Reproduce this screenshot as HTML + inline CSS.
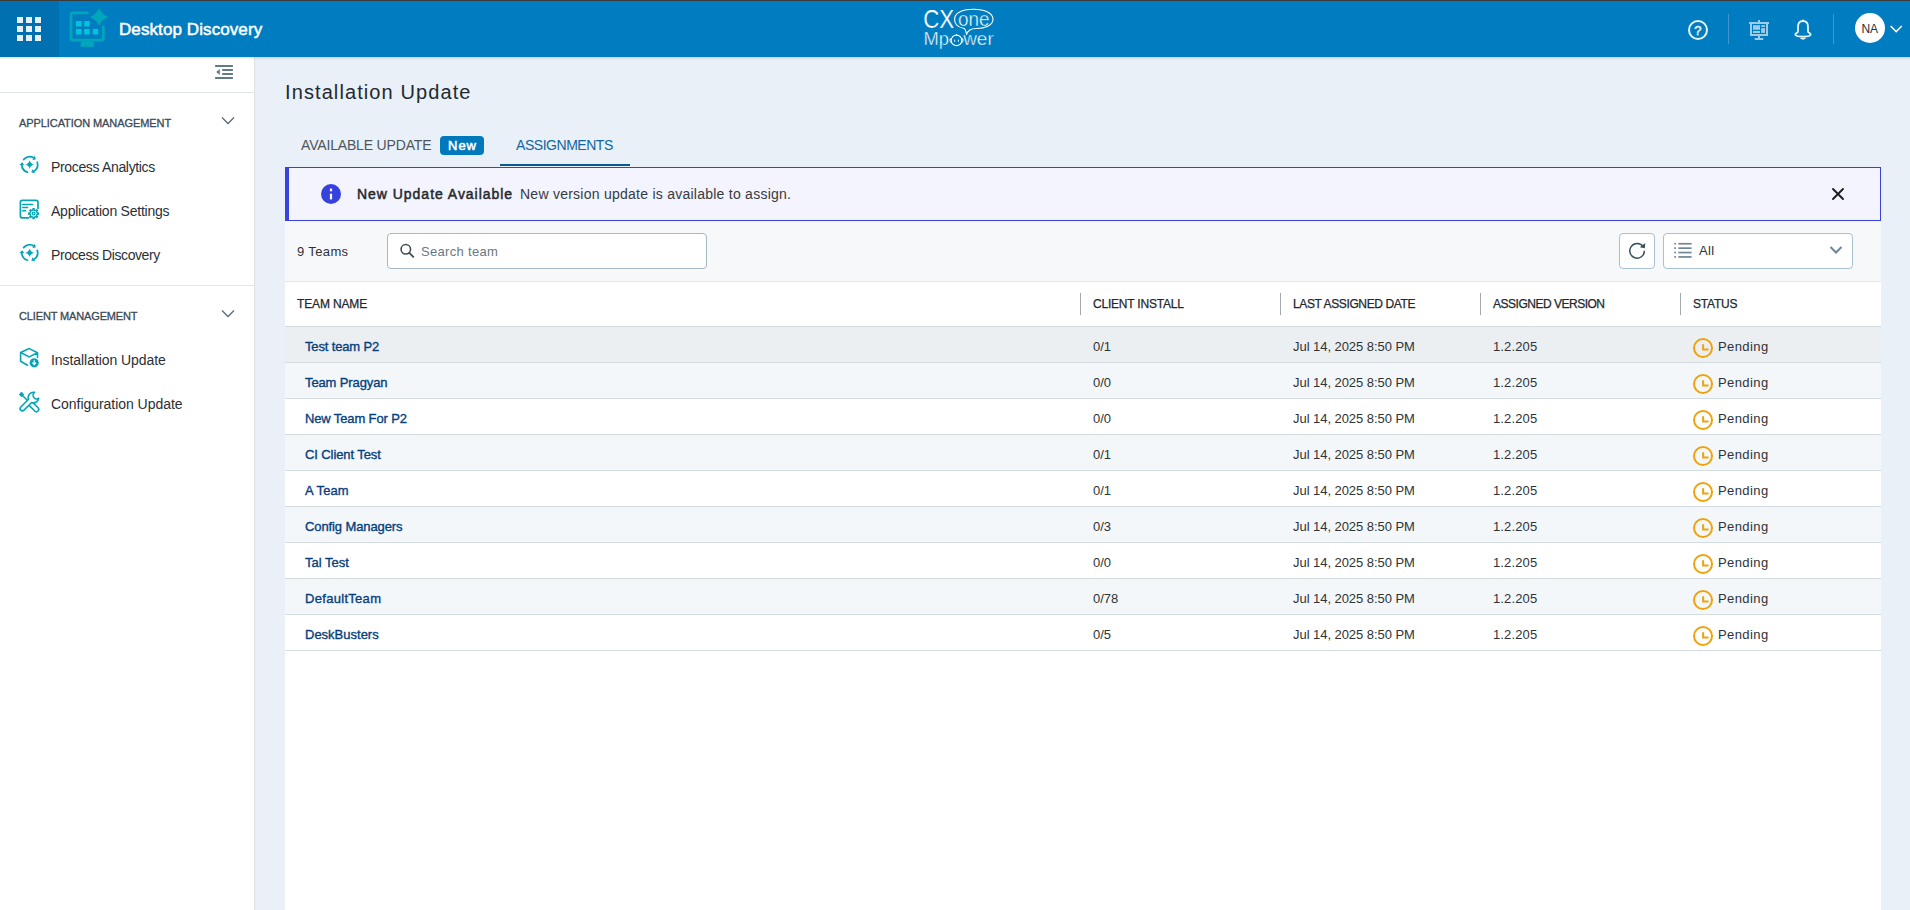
<!DOCTYPE html>
<html><head><meta charset="utf-8">
<style>
*{box-sizing:border-box;margin:0;padding:0}
html,body{width:1910px;height:910px;overflow:hidden;background:#e9f0f7;font-family:"Liberation Sans",sans-serif;color:#2a2f33}
.abs{position:absolute}
.t{position:absolute;white-space:nowrap;line-height:1}
#topline{left:0;top:0;width:1910px;height:1px;background:#3a3a3a}
#hdr{left:0;top:1px;width:1910px;height:56px;background:#007cc1}
#hdrdark{left:0;top:1px;width:59px;height:56px;background:#0070b0}
#hdrshadow{left:0;top:57px;width:1910px;height:3px;background:linear-gradient(rgba(0,0,0,0.13),rgba(0,0,0,0.04) 60%,rgba(0,0,0,0))}
.gsq{position:absolute;width:6px;height:6px;background:#e9f1f8}
#side{left:0;top:57px;width:254px;height:853px;background:#fff}
#sideb{left:254px;top:57px;width:1px;height:853px;background:#dfe2e5}
.sh{font-size:11px;color:#3b4955;-webkit-text-stroke:0.3px #3b4955}
.si{left:51px;font-size:14px;color:#2b3036}
.hl{position:absolute;left:0;width:254px;height:1px;background:#e3e6e8}
.tab{font-size:14px}
#banner{left:285px;top:167px;width:1596px;height:54px;background:#f3f4fe;border:1px solid #3843dd;border-left:4px solid #3843dd}
#tool{left:285px;top:221px;width:1596px;height:61px;background:#f7f8fa;border-bottom:1px solid #e3e7ea}
#table{left:285px;top:282px;width:1596px;height:628px;background:#fff}
.th{top:298px;font-size:12px;color:#22282d;-webkit-text-stroke:0.25px #22282d}
.csep{position:absolute;top:293px;width:1px;height:22px;background:#a6a9ac}
.row{position:absolute;left:285px;width:1596px;height:36px;border-bottom:1px solid #d5dce1}
.row span{position:absolute;top:13px;font-size:13px;line-height:1;white-space:nowrap;color:#2e3338}
.row .tn{left:20px;color:#073f7c;-webkit-text-stroke:0.35px #073f7c}
.row .ci{left:808px;letter-spacing:-0.05px}
.row .dt{left:1008px;letter-spacing:-0.05px}
.row .vr{left:1208px;letter-spacing:0.13px}
.row .st{left:1433px;letter-spacing:0.4px}
.clock{position:absolute;left:1407px;top:10px}

</style></head><body>
<div id="topline" class="abs"></div>
<div id="hdr" class="abs"></div>
<div id="hdrdark" class="abs"></div>

<div class="abs" style="left:17px;top:17px;width:24px;height:24px">
 <div class="gsq" style="left:0;top:0"></div><div class="gsq" style="left:9px;top:0"></div><div class="gsq" style="left:18px;top:0"></div>
 <div class="gsq" style="left:0;top:9px"></div><div class="gsq" style="left:9px;top:9px"></div><div class="gsq" style="left:18px;top:9px"></div>
 <div class="gsq" style="left:0;top:18px"></div><div class="gsq" style="left:9px;top:18px"></div><div class="gsq" style="left:18px;top:18px"></div>
</div>

<svg class="abs" style="left:66px;top:6px" width="46" height="44" viewBox="66 6 46 44">
 <path d="M87.5 12.8 H73.3 Q71 12.8 71 15.1 V37.9 Q71 40.2 73.3 40.2 H101 Q103.3 40.2 103.3 37.9 V27" fill="none" stroke="#00a6b9" stroke-width="2.8" stroke-linecap="round"/>
 <path d="M80.6 46.4 L94 46.4 L92.8 41.2 L81.6 41.2 Z" fill="#00a6b9" stroke="#00a6b9" stroke-width="0.6" stroke-linejoin="round"/>
 <rect x="76" y="21" width="5.5" height="5.5" fill="#00c3dc"/>
 <rect x="84.2" y="21" width="5.5" height="5.5" fill="#00c3dc"/>
 <rect x="76" y="29" width="5.5" height="5.5" fill="#00c3dc"/>
 <rect x="84.2" y="29" width="5.5" height="5.5" fill="#00c3dc"/>
 <rect x="92.7" y="29" width="5.5" height="5.5" fill="#00c3dc"/>
 <path d="M99.1 7.9 Q101.7 14.3 108.2 16.9 Q101.7 19.5 99.1 26 Q96.5 19.5 90 16.9 Q96.5 14.3 99.1 7.9 Z" fill="#00a6b9"/>
</svg>
<div class="t" style="left:119px;top:21px;font-size:17px;color:#fff;-webkit-text-stroke:0.5px #fff;letter-spacing:0.09px">Desktop Discovery</div>

<svg class="abs" style="left:918px;top:4px" width="80" height="48" viewBox="918 4 80 48">
 <g font-family="Liberation Sans" fill="#fff" stroke="#007cc1" paint-order="normal">
  <text x="923.2" y="27.8" font-size="25" stroke-width="0.2" textLength="31" lengthAdjust="spacingAndGlyphs">CX</text>
  <text x="958" y="25.9" font-size="20.5" stroke-width="0.45" textLength="31.5" lengthAdjust="spacingAndGlyphs">one</text>
  <text x="923.4" y="45.3" font-size="18.5" stroke-width="0.4" textLength="25.5" lengthAdjust="spacingAndGlyphs">Mp</text>
  <text x="963.2" y="45.3" font-size="18.5" stroke-width="0.4" textLength="30.5" lengthAdjust="spacingAndGlyphs">wer</text>
 </g>
 <path d="M963.5 28.2 C957 27.5 954.2 23 954.6 18.5 C955.3 12.3 963.5 9.3 973.5 9.3 C985 9.3 993 13 993 19.3 C993 25 986 28.5 976 28.5 C970.5 28.5 967.8 30.5 966.5 34.5 C966 31 965.5 28.5 963.5 28.2 Z" fill="none" stroke="#fff" stroke-width="1.1" stroke-linejoin="round"/>
 <circle cx="956.5" cy="40.4" r="5.3" fill="none" stroke="#fff" stroke-width="1.2"/>
 <path d="M950.6 38.3 Q949 40.4 950.6 42.5 M962.4 38.3 Q964 40.4 962.4 42.5" fill="none" stroke="#fff" stroke-width="1.1"/>
 <rect x="954.3" y="39.5" width="0.9" height="2.4" rx="0.4" fill="#fff"/>
 <rect x="957.9" y="39.5" width="0.9" height="2.4" rx="0.4" fill="#fff"/>
 <path d="M955.3 35.6 L956.5 34.3 L957.7 35.6" fill="none" stroke="#fff" stroke-width="0.8"/>
</svg>

<svg class="abs" style="left:1680px;top:10px" width="230" height="40" viewBox="1680 10 230 40">
 <circle cx="1698" cy="30" r="9" fill="none" stroke="#e9f3fa" stroke-width="2"/>
 <text x="1694.3" y="35" font-family="Liberation Sans" font-size="13" fill="#e9f3fa" stroke="#e9f3fa" stroke-width="0.5">?</text>
 <rect x="1728" y="14" width="1" height="30" fill="#3f97d0"/>
 <g fill="#9ccbe8">
  <rect x="1749" y="22" width="20" height="2"/>
  <rect x="1758" y="20" width="2" height="2"/>
  <rect x="1750" y="24" width="2" height="12"/>
  <rect x="1766" y="24" width="2" height="12"/>
  <rect x="1750" y="34" width="18" height="2"/>
  <rect x="1753" y="25.2" width="7" height="4.6"/>
  <rect x="1753" y="31" width="7" height="2"/>
  <rect x="1761.2" y="25.2" width="3.8" height="1.8"/>
  <rect x="1761.2" y="28.1" width="3.8" height="4.8"/>
  <rect x="1758" y="36" width="2" height="2.2"/>
  <rect x="1754.7" y="38" width="8.5" height="2"/>
 </g>
 <path d="M1803 21 C1799.5 21 1798 23.5 1798 27 L1798 31.5 C1798 32.8 1795.3 33.2 1795.3 34.5 C1795.3 36 1799 36.6 1803 36.6 C1807 36.6 1810.7 36 1810.7 34.5 C1810.7 33.2 1808 32.8 1808 31.5 L1808 27 C1808 23.5 1806.5 21 1803 21 Z" fill="none" stroke="#e8f2f9" stroke-width="1.8" stroke-linejoin="round"/>
 <path d="M1800.5 38.2 Q1803 40.4 1805.5 38.2 Z" fill="#e8f2f9" stroke="#e8f2f9" stroke-width="1"/>
 <circle cx="1803" cy="20.6" r="1.1" fill="#e8f2f9"/>
 <rect x="1833" y="14" width="1" height="30" fill="#3f97d0"/>
 <circle cx="1870" cy="28" r="15" fill="#fff"/>
 <text x="1869.8" y="32.5" font-family="Liberation Sans" font-size="12" fill="#2b2f33" text-anchor="middle">NA</text>
 <path d="M1890.6 26 L1896.2 31.6 L1901.8 26" fill="none" stroke="#fff" stroke-width="1.5"/>
</svg>

<div id="side" class="abs"></div>
<div id="sideb" class="abs"></div>
<div id="hdrshadow" class="abs"></div>
<svg class="abs" style="left:212px;top:62px" width="24" height="20" viewBox="212 62 24 20">
 <path d="M215.1 66 H232.9 M222.2 70 H232.9 M222.2 74 H232.9 M215.1 78 H232.9" stroke="#637a88" stroke-width="1.9"/>
 <path d="M219.8 68.9 L216.2 71.9 L219.8 74.9 Z" fill="#637a88"/>
</svg>
<div class="hl" style="top:92px"></div>
<div class="t sh" style="left:19px;top:118px;letter-spacing:-0.08px">APPLICATION MANAGEMENT</div>
<svg class="abs" style="left:220px;top:114px" width="16" height="14"><path d="M2 3.5 L8 9.5 L14 3.5" fill="none" stroke="#5c6a74" stroke-width="1.3"/></svg>
<div class="t si" style="top:160px;letter-spacing:-0.34px">Process Analytics</div>
<div class="t si" style="top:204px;letter-spacing:-0.23px">Application Settings</div>
<div class="t si" style="top:248px;letter-spacing:-0.42px">Process Discovery</div>
<div class="hl" style="top:285px"></div>
<div class="t sh" style="left:19px;top:311px;letter-spacing:-0.14px">CLIENT MANAGEMENT</div>
<svg class="abs" style="left:220px;top:307px" width="16" height="14"><path d="M2 3.5 L8 9.5 L14 3.5" fill="none" stroke="#5c6a74" stroke-width="1.3"/></svg>
<div class="t si" style="top:353px;letter-spacing:-0.06px">Installation Update</div>
<div class="t si" style="top:397px;letter-spacing:-0.04px">Configuration Update</div>

<!-- main -->
<div class="t" style="left:285px;top:82px;font-size:20px;color:#23292e;letter-spacing:1.1px">Installation Update</div>
<div class="t tab" style="left:301px;top:138px;color:#4d565d;letter-spacing:-0.17px">AVAILABLE UPDATE</div>
<div class="abs" style="left:440px;top:136px;width:44px;height:19px;background:#0079bc;border-radius:4px"></div>
<div class="t" style="left:448px;top:139px;font-size:13px;color:#fff;-webkit-text-stroke:0.5px #fff;letter-spacing:1.0px">New</div>
<div class="t tab" style="left:516px;top:138px;color:#1066a0;letter-spacing:-0.46px">ASSIGNMENTS</div>
<div class="abs" style="left:500px;top:164px;width:130px;height:2px;background:#0a5a90"></div>

<div id="banner" class="abs"></div>
<svg class="abs" style="left:320px;top:183px" width="22" height="22" viewBox="0 0 22 22">
 <circle cx="11" cy="11" r="10" fill="#3742de"/>
 <rect x="9.9" y="10.7" width="2.2" height="5.7" fill="#fff"/>
 <rect x="9.9" y="5.6" width="2.2" height="2.7" fill="#fff"/>
</svg>
<div class="t" style="left:357px;top:187px;font-size:14px;color:#262a2e;-webkit-text-stroke:0.5px #262a2e;letter-spacing:0.97px">New Update Available</div>
<div class="t" style="left:520px;top:187px;font-size:14px;color:#363b40;letter-spacing:0.25px">New version update is available to assign.</div>
<svg class="abs" style="left:1828px;top:184px" width="20" height="20" viewBox="0 0 20 20">
 <path d="M5 5 L15 15 M15 5 L5 15" stroke="#1c1c1c" stroke-width="1.9" stroke-linecap="round"/>
</svg>

<div id="tool" class="abs"></div>
<div class="t" style="left:297px;top:245px;font-size:13px;color:#2e3338;letter-spacing:0.37px">9 Teams</div>
<div class="abs" style="left:387px;top:233px;width:320px;height:36px;background:#fff;border:1px solid #a9b7c2;border-radius:4px"></div>
<svg class="abs" style="left:396px;top:240px" width="22" height="22" viewBox="0 0 22 22">
 <circle cx="9.8" cy="9.3" r="4.75" fill="none" stroke="#3c4d58" stroke-width="1.6"/>
 <path d="M13.3 12.8 L17.3 16.9" stroke="#3c4d58" stroke-width="1.8" stroke-linecap="round"/>
</svg>
<div class="t" style="left:421px;top:245px;font-size:13px;color:#6b7680;letter-spacing:0.31px">Search team</div>

<div class="abs" style="left:1619px;top:233px;width:36px;height:36px;background:#fff;border:1px solid #a9c0d0;border-radius:4px"></div>
<svg class="abs" style="left:1626px;top:239px" width="22" height="22" viewBox="0 0 22 22">
 <path d="M17.2 7.8 A7.3 7.3 0 1 0 18.4 11.8" fill="none" stroke="#34505e" stroke-width="1.5"/>
 <path d="M19.3 4 L18.8 9.3 L13.8 8.3 Z" fill="#34505e"/>
</svg>
<div class="abs" style="left:1663px;top:233px;width:190px;height:36px;background:#fff;border:1px solid #a9c0d0;border-radius:4px"></div>
<svg class="abs" style="left:1672px;top:240px" width="22" height="22" viewBox="0 0 22 22">
 <g fill="#6f8797">
  <rect x="2.2" y="2.9" width="1.8" height="1.6"/><rect x="2.2" y="7.3" width="1.8" height="1.6"/><rect x="2.2" y="11.7" width="1.8" height="1.6"/><rect x="2.2" y="16.1" width="1.8" height="1.6"/>
  <rect x="6.4" y="2.9" width="13.2" height="1.7"/><rect x="6.4" y="7.3" width="13.2" height="1.7"/><rect x="6.4" y="11.7" width="13.2" height="1.7"/><rect x="6.4" y="16.1" width="13.2" height="1.7"/>
 </g>
</svg>
<div class="t" style="left:1699px;top:244px;font-size:13px;color:#2e3338;letter-spacing:0.4px">All</div>
<svg class="abs" style="left:1828px;top:243px" width="16" height="14" viewBox="0 0 16 14">
 <path d="M2.5 4 L8 9.5 L13.5 4" fill="none" stroke="#6a8797" stroke-width="2"/>
</svg>

<div id="table" class="abs"></div>
<div class="t th" style="left:297px;letter-spacing:-0.14px">TEAM NAME</div>
<div class="csep" style="left:1080px"></div>
<div class="t th" style="left:1093px;letter-spacing:-0.21px">CLIENT INSTALL</div>
<div class="csep" style="left:1280px"></div>
<div class="t th" style="left:1293px;letter-spacing:-0.38px">LAST ASSIGNED DATE</div>
<div class="csep" style="left:1480px"></div>
<div class="t th" style="left:1493px;letter-spacing:-0.49px">ASSIGNED VERSION</div>
<div class="csep" style="left:1680px"></div>
<div class="t th" style="left:1693px;letter-spacing:-0.2px">STATUS</div>
<div class="abs" style="left:285px;top:326px;width:1596px;height:1px;background:#d5dce1"></div>
<div class="row" style="top:327px;background:#eceff1"><span class="tn" style="letter-spacing:-0.15px">Test team P2</span><span class="ci">0/1</span><span class="dt">Jul 14, 2025 8:50 PM</span><span class="vr">1.2.205</span><svg class="clock" width="22" height="22" viewBox="0 0 22 22"><circle cx="11" cy="11" r="9" fill="none" stroke="#eea20d" stroke-width="2"/><path d="M11.1 7.2 V12.4 H16.6" fill="none" stroke="#eea20d" stroke-width="2"/></svg><span class="st">Pending</span></div>
<div class="row" style="top:363px;background:#f4f7fa"><span class="tn" style="letter-spacing:-0.12px">Team Pragyan</span><span class="ci">0/0</span><span class="dt">Jul 14, 2025 8:50 PM</span><span class="vr">1.2.205</span><svg class="clock" width="22" height="22" viewBox="0 0 22 22"><circle cx="11" cy="11" r="9" fill="none" stroke="#eea20d" stroke-width="2"/><path d="M11.1 7.2 V12.4 H16.6" fill="none" stroke="#eea20d" stroke-width="2"/></svg><span class="st">Pending</span></div>
<div class="row" style="top:399px;background:#ffffff"><span class="tn" style="letter-spacing:-0.13px">New Team For P2</span><span class="ci">0/0</span><span class="dt">Jul 14, 2025 8:50 PM</span><span class="vr">1.2.205</span><svg class="clock" width="22" height="22" viewBox="0 0 22 22"><circle cx="11" cy="11" r="9" fill="none" stroke="#eea20d" stroke-width="2"/><path d="M11.1 7.2 V12.4 H16.6" fill="none" stroke="#eea20d" stroke-width="2"/></svg><span class="st">Pending</span></div>
<div class="row" style="top:435px;background:#f4f7fa"><span class="tn" style="letter-spacing:-0.1px">CI Client Test</span><span class="ci">0/1</span><span class="dt">Jul 14, 2025 8:50 PM</span><span class="vr">1.2.205</span><svg class="clock" width="22" height="22" viewBox="0 0 22 22"><circle cx="11" cy="11" r="9" fill="none" stroke="#eea20d" stroke-width="2"/><path d="M11.1 7.2 V12.4 H16.6" fill="none" stroke="#eea20d" stroke-width="2"/></svg><span class="st">Pending</span></div>
<div class="row" style="top:471px;background:#ffffff"><span class="tn" style="letter-spacing:0.1px">A Team</span><span class="ci">0/1</span><span class="dt">Jul 14, 2025 8:50 PM</span><span class="vr">1.2.205</span><svg class="clock" width="22" height="22" viewBox="0 0 22 22"><circle cx="11" cy="11" r="9" fill="none" stroke="#eea20d" stroke-width="2"/><path d="M11.1 7.2 V12.4 H16.6" fill="none" stroke="#eea20d" stroke-width="2"/></svg><span class="st">Pending</span></div>
<div class="row" style="top:507px;background:#f4f7fa"><span class="tn" style="letter-spacing:-0.1px">Config Managers</span><span class="ci">0/3</span><span class="dt">Jul 14, 2025 8:50 PM</span><span class="vr">1.2.205</span><svg class="clock" width="22" height="22" viewBox="0 0 22 22"><circle cx="11" cy="11" r="9" fill="none" stroke="#eea20d" stroke-width="2"/><path d="M11.1 7.2 V12.4 H16.6" fill="none" stroke="#eea20d" stroke-width="2"/></svg><span class="st">Pending</span></div>
<div class="row" style="top:543px;background:#ffffff"><span class="tn" style="letter-spacing:0px">Tal Test</span><span class="ci">0/0</span><span class="dt">Jul 14, 2025 8:50 PM</span><span class="vr">1.2.205</span><svg class="clock" width="22" height="22" viewBox="0 0 22 22"><circle cx="11" cy="11" r="9" fill="none" stroke="#eea20d" stroke-width="2"/><path d="M11.1 7.2 V12.4 H16.6" fill="none" stroke="#eea20d" stroke-width="2"/></svg><span class="st">Pending</span></div>
<div class="row" style="top:579px;background:#f4f7fa"><span class="tn" style="letter-spacing:0.3px">DefaultTeam</span><span class="ci">0/78</span><span class="dt">Jul 14, 2025 8:50 PM</span><span class="vr">1.2.205</span><svg class="clock" width="22" height="22" viewBox="0 0 22 22"><circle cx="11" cy="11" r="9" fill="none" stroke="#eea20d" stroke-width="2"/><path d="M11.1 7.2 V12.4 H16.6" fill="none" stroke="#eea20d" stroke-width="2"/></svg><span class="st">Pending</span></div>
<div class="row" style="top:615px;background:#ffffff"><span class="tn" style="letter-spacing:0px">DeskBusters</span><span class="ci">0/5</span><span class="dt">Jul 14, 2025 8:50 PM</span><span class="vr">1.2.205</span><svg class="clock" width="22" height="22" viewBox="0 0 22 22"><circle cx="11" cy="11" r="9" fill="none" stroke="#eea20d" stroke-width="2"/><path d="M11.1 7.2 V12.4 H16.6" fill="none" stroke="#eea20d" stroke-width="2"/></svg><span class="st">Pending</span></div>

<!-- sidebar icons -->
<svg class="abs" style="left:0;top:57px" width="60" height="370" viewBox="0 57 60 370">
<path d="M23.65 159.52 A7.9 7.9 0 0 1 33.65 157.76 M37.25 162.29 A7.9 7.9 0 0 1 33.89 171.30 M27.39 172.15 A7.9 7.9 0 0 1 21.80 164.88" fill="none" stroke="#04a5b7" stroke-width="1.8" stroke-linecap="round"/><path d="M35.75 159.52 L34.90 155.59 L32.40 159.92 Z M31.34 172.33 L35.21 173.42 L32.56 169.18 Z M22.19 162.16 L19.31 164.96 L24.30 164.79 Z M29.7 160.29999999999998 Q30.5 163.79999999999998 34.0 164.6 Q30.5 165.4 29.7 168.9 Q28.9 165.4 25.4 164.6 Q28.9 163.79999999999998 29.7 160.29999999999998 Z" fill="#04a5b7"/>
<path d="M23.65 247.62 A7.9 7.9 0 0 1 33.65 245.86 M37.25 250.39 A7.9 7.9 0 0 1 33.89 259.40 M27.39 260.25 A7.9 7.9 0 0 1 21.80 252.98" fill="none" stroke="#04a5b7" stroke-width="1.8" stroke-linecap="round"/><path d="M35.75 247.62 L34.90 243.69 L32.40 248.02 Z M31.34 260.43 L35.21 261.52 L32.56 257.28 Z M22.19 250.26 L19.31 253.06 L24.30 252.89 Z M29.7 248.39999999999998 Q30.5 251.89999999999998 34.0 252.7 Q30.5 253.5 29.7 257.0 Q28.9 253.5 25.4 252.7 Q28.9 251.89999999999998 29.7 248.39999999999998 Z" fill="#04a5b7"/>
<path d="M28.6 217.9 H22.4 Q20.4 217.9 20.4 215.9 V202.3 Q20.4 200.3 22.4 200.3 H36 Q38 200.3 38 202.3 V208.6" fill="none" stroke="#04a5b7" stroke-width="1.7" stroke-linecap="round"/>
<path d="M22.7 204.6 H32.6 M22.7 207.6 H27.6 M22.7 210.7 H25.7" fill="none" stroke="#04a5b7" stroke-width="1.5" stroke-linecap="round"/>
<path d="M37.10 212.98 L38.50 212.91 L38.50 214.29 L37.10 214.22 L36.51 215.64 L37.55 216.58 L36.58 217.55 L35.64 216.51 L34.22 217.10 L34.29 218.50 L32.91 218.50 L32.98 217.10 L31.56 216.51 L30.62 217.55 L29.65 216.58 L30.69 215.64 L30.10 214.22 L28.70 214.29 L28.70 212.91 L30.10 212.98 L30.69 211.56 L29.65 210.62 L30.62 209.65 L31.56 210.69 L32.98 210.10 L32.91 208.70 L34.29 208.70 L34.22 210.10 L35.64 210.69 L36.58 209.65 L37.55 210.62 L36.51 211.56 Z" fill="#fff" stroke="#04a5b7" stroke-width="1.3" stroke-linejoin="round"/>
<circle cx="33.6" cy="213.6" r="1.4" fill="none" stroke="#04a5b7" stroke-width="1.2"/>
<path d="M27.5 365.2 L20.6 361.2 V352.5 L29.2 348.6 L37.5 352.8 V357.4 M20.6 352.5 L29.2 356.9 L37.5 352.8" fill="none" stroke="#04a5b7" stroke-width="1.6" stroke-linejoin="round" stroke-linecap="round"/>
<circle cx="34.2" cy="362.8" r="5.6" fill="#fff"/>
<circle cx="34.2" cy="362.8" r="4.6" fill="#04a5b7"/>
<path d="M34.2 360.3 V364 M32.4 362.6 L34.2 364.6 L36 362.6" fill="none" stroke="#fff" stroke-width="1.2"/>
<rect x="19.6" y="392.6" width="3.8" height="3.8" rx="0.6" transform="rotate(45 21.5 394.5)" fill="#04a5b7"/>
<path d="M22.50 395.50 L27.50 400.50" stroke="#04a5b7" stroke-width="1.6"/>
<path d="M31.43 401.17 L38.03 407.77 A2.3 2.3 0 0 1 34.77 411.03 L28.17 404.43 Z" fill="#fff" stroke="#04a5b7" stroke-width="1.6"/>
<path d="M34.60 392.32 A5.3 5.3 0 0 0 28.52 399.31 L20.84 407.04 A2.2 2.2 0 0 0 23.96 410.16 L31.69 402.48 A5.3 5.3 0 0 0 38.75 398.24 A3.4 3.4 0 0 1 34.60 392.32 Z" fill="#fff" stroke="#04a5b7" stroke-width="1.6" stroke-linejoin="round"/>
</svg>

</body></html>
